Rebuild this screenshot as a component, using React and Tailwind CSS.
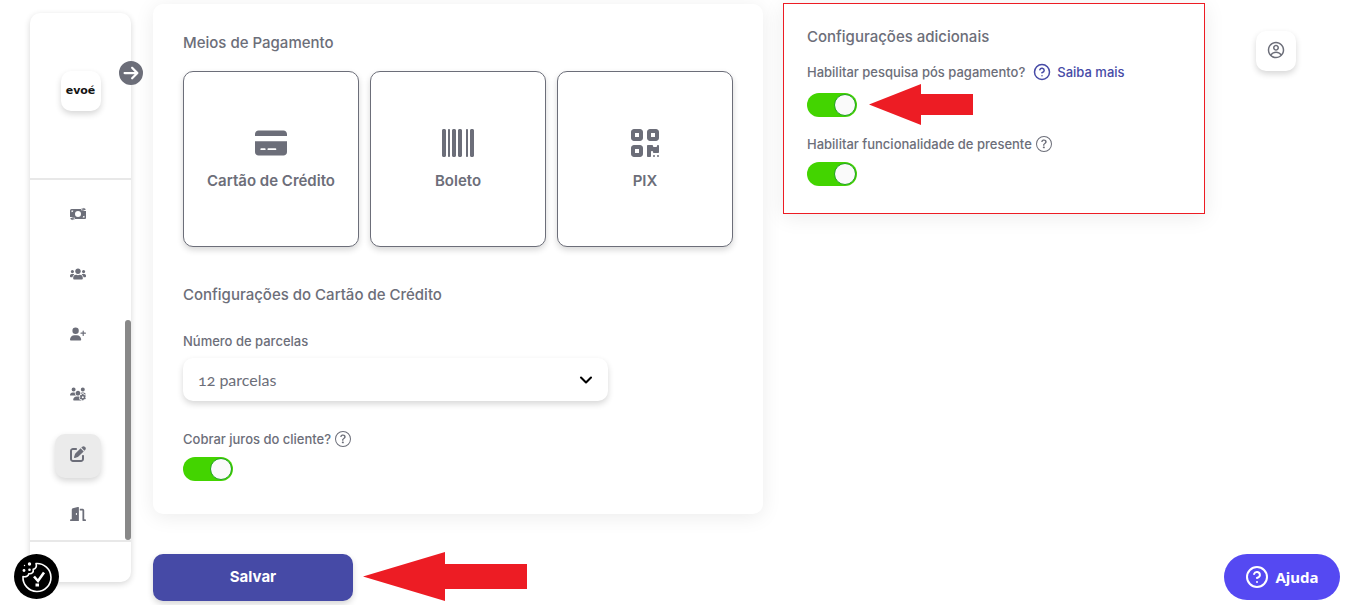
import React from 'react';
import {
  FaBarcode,
  FaCircleArrowRight,
  FaCreditCard,
  FaDoorOpen,
  FaPenToSquare,
  FaQrcode,
  FaUserPlus,
  FaUsersGear,
} from 'react-icons/fa6';
import { FaUsers } from 'react-icons/fa';
import { BsQuestionCircle } from 'react-icons/bs';
import { CgProfile } from 'react-icons/cg';
import { ChevronDown, CircleHelp } from 'lucide-react';

function MoneyIcon({ className }) {
  return (
    <svg viewBox="0 0 16 16" className={className} fill="currentColor">
      <path
        fillRule="evenodd"
        d="M1.500 3H11v1.200h2.500V5H16v7a1 1 0 0 1-1 1H5v-1.200H2.500V11H0V4.500A1.500 1.500 0 0 1 1.500 3ZM8 5a3 3 0 1 0 0 6 3 3 0 0 0 0-6ZM1.500 4.500v1.800a1.800 1.800 0 0 0 1.800-1.800Zm13 7V9.700a1.800 1.800 0 0 0-1.800 1.800Z"
      />
      <path d="M11.500 2.600h2V1.800L16 3.200l-2.500 1.500v-.9h-2ZM4.500 13.400h-2v.8L0 12.800l2.500-1.500v.9h2Z" />
    </svg>
  );
}

const menuItems = [
  { id: 'financeiro', label: 'Financeiro', icon: MoneyIcon },
  { id: 'participantes', label: 'Participantes', icon: FaUsers },
  { id: 'convidar', label: 'Convidar', icon: FaUserPlus },
  { id: 'equipe', label: 'Equipe', icon: FaUsersGear },
  { id: 'editar', label: 'Editar', icon: FaPenToSquare, active: true },
  { id: 'sair', label: 'Sair', icon: FaDoorOpen },
];

const paymentMethods = [
  { id: 'credito', label: 'Cartão de Crédito', icon: FaCreditCard },
  { id: 'boleto', label: 'Boleto', icon: FaBarcode },
  { id: 'pix', label: 'PIX', icon: FaQrcode },
];

function Toggle({ id }) {
  return (
    <input
      id={id}
      type="checkbox"
      role="switch"
      defaultChecked
      className="
        relative block h-6 w-[50px] shrink-0 cursor-pointer appearance-none
        rounded-full bg-gray-300 checked:bg-[#43d400]
        before:absolute before:top-px before:left-px before:size-[22px]
        before:rounded-full before:border before:border-[#1fa01f] before:bg-[#fafafa]
        checked:before:left-[27px]
      "
    />
  );
}

function Sidebar() {
  return (
    <aside className="relative mt-[13px] ml-[30px] flex w-[101px] shrink-0 flex-col self-start rounded-[10px] bg-white shadow-[0_2px_6px_rgba(0,0,0,0.16)]">
      <div className="flex h-[165px] justify-center pt-[58px]">
        <a
          href="#inicio"
          className="flex size-10 items-center justify-center rounded-[10px] bg-white font-['DejaVu_Sans',sans-serif] text-[11px] font-bold text-[#141414] shadow-[0_3px_6px_rgba(0,0,0,0.16)]"
        >
          evoé
        </a>
      </div>

      <button
        type="button"
        aria-label="Expandir menu"
        className="absolute top-12 -right-3 rounded-full bg-white text-[#6c6e79]"
      >
        <FaCircleArrowRight className="size-6" />
      </button>

      <div className="flex border-y-2 border-[#e8e8e8]">
        <nav className="flex flex-1 flex-col items-center gap-4 pt-3.5 pb-0.5">
          {menuItems.map(({ id, label, icon: Icon, active }) => (
            <a
              key={id}
              href={`#${id}`}
              aria-label={label}
              className={`flex h-11 w-[46px] items-center justify-center rounded-[10px] pb-1 ${
                active ? 'bg-[#ebebeb] shadow-[0_3px_6px_rgba(0,0,0,0.16)]' : ''
              }`}
            >
              <Icon className="size-4" />
            </a>
          ))}
        </nav>
        {/* Scroll thumb */}
        <div className="h-[220px] w-1.5 self-end rounded-full bg-[#888888]" />
      </div>

      <div className="h-10" />
    </aside>
  );
}

function PaymentCard() {
  return (
    <section className="rounded-[10px] bg-white px-[30px] pt-[27px] pb-[33px] shadow-[0_3px_20px_rgba(0,0,0,0.08)]">
      <h2 className="text-[15px] leading-6 font-medium">Meios de Pagamento</h2>

      <div className="mt-4 grid grid-cols-3 gap-[11px]">
        {paymentMethods.map(({ id, label, icon: Icon }) => (
          <button
            key={id}
            type="button"
            className="flex aspect-square flex-col items-center justify-center gap-3 rounded-[10px] border border-[#6c6e79] bg-white shadow-[0_3px_6px_rgba(0,0,0,0.16)]"
          >
            <Icon className="size-8" />
            <span className="text-[15px] leading-5 font-semibold">{label}</span>
          </button>
        ))}
      </div>

      <h2 className="mt-9 text-[15px] leading-6 font-medium">
        Configurações do Cartão de Crédito
      </h2>

      <label htmlFor="parcelas" className="mt-6 block text-[13px] leading-5 font-medium">
        Número de parcelas
      </label>
      <div className="relative mt-[7px] max-w-[425px]">
        <select
          id="parcelas"
          defaultValue="12"
          className="block h-[43px] w-full appearance-none rounded-[10px] bg-white px-[15px] font-['Lato',sans-serif] text-base [font-variant-numeric:oldstyle-nums] shadow-[0_3px_6px_rgba(0,0,0,0.16)]"
        >
          <option value="1">1 parcela</option>
          <option value="6">6 parcelas</option>
          <option value="12">12 parcelas</option>
        </select>
        <ChevronDown
          strokeWidth={2.5}
          className="pointer-events-none absolute top-3 right-3 size-5 text-black"
        />
      </div>

      <div className="mt-7 flex items-center gap-1">
        <label htmlFor="juros" className="text-[13px] leading-5 font-medium">
          Cobrar juros do cliente?
        </label>
        <BsQuestionCircle className="size-4" />
      </div>
      <div className="mt-2">
        <Toggle id="juros" />
      </div>
    </section>
  );
}

function ExtraSettings() {
  return (
    <section className="border border-[#ed1c24] bg-white px-[23px] pt-[21px] pb-[27px] shadow-[0_3px_20px_rgba(0,0,0,0.08)]">
      <h2 className="text-[15px] leading-6 font-medium">Configurações adicionais</h2>

      <div className="mt-[13px] flex items-center">
        <label htmlFor="pesquisa" className="text-[13px] leading-5 font-medium">
          Habilitar pesquisa pós pagamento?
        </label>
        <a
          href="#saiba-mais"
          className="ml-2 flex items-center gap-1.5 text-[13px] leading-5 font-medium text-[#464aa6]"
        >
          <CircleHelp className="size-[18px]" />
          Saiba mais
        </a>
      </div>
      <div className="mt-[11px] flex items-center gap-3">
        <Toggle id="pesquisa" />
        <svg viewBox="0 0 104 41" className="-mt-2.5 -mb-2 h-[41px] w-[104px]" fill="#ed1c24">
          <polygon points="0,20.5 52,0 52,10 104,10 104,31 52,31 52,41" />
        </svg>
      </div>

      <div className="mt-[17px] flex items-center gap-1">
        <label htmlFor="presente" className="text-[13px] leading-5 font-medium">
          Habilitar funcionalidade de presente
        </label>
        <BsQuestionCircle className="size-4" />
      </div>
      <div className="mt-2">
        <Toggle id="presente" />
      </div>
    </section>
  );
}

function CookieIcon() {
  return (
    <svg viewBox="0 0 45 45" className="size-full" fill="none">
      <path
        d="M22 9.500A14 14 0 1 1 9 22.500c3 .8 5.500-.5 5.800-2.800 3.200.4 5-1.500 4.400-4.300 2.600-.6 3.800-3 2.800-5.900Z"
        stroke="#fff"
        strokeWidth="1.600"
        strokeLinejoin="round"
      />
      <path d="m20 22.500 4 4.500 6-8.500" stroke="#fff" strokeWidth="2.600" />
      <rect x="21.500" y="29.500" width="3.500" height="3" fill="#fff" />
      <circle cx="15.500" cy="10" r="1.700" fill="#fff" />
      <circle cx="10" cy="16.500" r="1.400" fill="#fff" />
      <circle cx="15.500" cy="15.800" r="1.300" fill="#fff" />
      <circle cx="10.500" cy="11.500" r=".7" fill="#fff" />
    </svg>
  );
}

function App() {
  return (
    <div className="flex min-h-screen bg-white font-['Inter',sans-serif] text-[#6c6e79]">
      <Sidebar />

      <main className="ml-[22px] grid flex-1 grid-cols-[610fr_422fr] items-start gap-x-5 pt-[3px]">
        <div className="pt-px">
          <PaymentCard />
          <div className="mt-[38px] flex items-end gap-2.5">
            <button
              type="button"
              className="h-[47px] w-[200px] rounded-[10px] bg-[#464aa6] text-[15px] font-bold text-white shadow-[0_3px_6px_rgba(0,0,0,0.16)]"
            >
              Salvar
            </button>
            <svg viewBox="0 0 164 49" className="h-[49px] w-[164px]" fill="#ed1c24">
              <polygon points="0,24.5 82,0 82,12 164,12 164,37 82,37 82,49" />
            </svg>
          </div>
        </div>
        <ExtraSettings />
      </main>

      <div className="w-[156px] shrink-0 pt-[31px] pl-[51px]">
        <button
          type="button"
          aria-label="Perfil"
          className="flex size-10 items-center justify-center rounded-[10px] bg-white pb-0.5 shadow-[0_3px_6px_rgba(0,0,0,0.16)]"
        >
          <CgProfile className="size-[18px]" />
        </button>
      </div>

      <button
        type="button"
        aria-label="Preferências de cookies"
        className="fixed bottom-1.5 left-3.5 size-[45px] rounded-full bg-black"
      >
        <CookieIcon />
      </button>

      <button
        type="button"
        className="fixed right-[21px] bottom-[5px] flex h-[46px] w-[116px] items-center justify-center gap-1.5 rounded-full bg-[#5549f2] font-['Noto_Sans',sans-serif] text-[15px] font-bold text-white"
      >
        <CircleHelp className="size-6" />
        Ajuda
      </button>
    </div>
  );
}

export default App;
